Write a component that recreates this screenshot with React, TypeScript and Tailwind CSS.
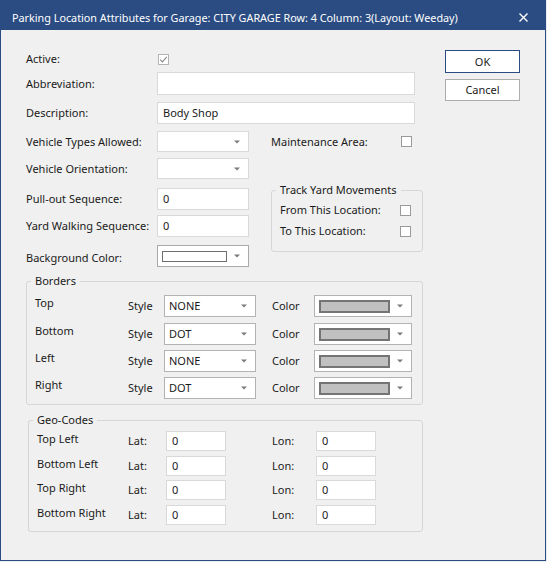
import React from "react";

const Arrow = () => (
  <svg width="6" height="4" viewBox="0 0 6 4" className="shrink-0">
    <path d="M0 0.5h6L3 3.5z" fill="#7b7b7b" />
  </svg>
);

const Box = ({ checked = false }: { checked?: boolean }) => (
  <div
    className={
      checked
        ? "w-[11px] h-[11px] border border-[#b4b4b4] bg-white flex items-center justify-center"
        : "w-[11px] h-[11px] border border-[#9a9a9a] bg-white"
    }
  >
    {checked && (
      <svg width="9" height="9" viewBox="0 0 9 9">
        <path d="M1.2 4.6L3.4 6.9L7.8 1.8" stroke="#8a8a8a" strokeWidth="1.1" fill="none" />
      </svg>
    )}
  </div>
);

const TextBox = ({ value, className }: { value?: string; className: string }) => (
  <div className={`bg-white border border-[#d9d9d9] flex items-center ${className}`}>{value}</div>
);

const Drop = ({ value, className }: { value?: string; className: string }) => (
  <div className={`bg-white border flex items-center justify-between pr-[8px] ${className}`}>
    <span>{value}</span>
    <Arrow />
  </div>
);

const borders = [
  { side: "Top", style: "NONE" },
  { side: "Bottom", style: "DOT" },
  { side: "Left", style: "NONE" },
  { side: "Right", style: "DOT" },
];

const geo = ["Top Left", "Bottom Left", "Top Right", "Bottom Right"];

export default function App() {
  return (
    <div className="w-[547px] h-[562px] bg-[#e9ecef] font-['Noto_Sans',sans-serif] text-[11px] leading-[16px] text-[#1a1a1a] whitespace-nowrap">
      <div className="w-[546px] h-[561px] flex flex-col">
        {/* Title bar */}
        <div className="h-[30px] shrink-0 bg-[#2a4c82] flex items-center justify-between pl-[12px] pr-[18px] pt-[7px] pb-[2px] text-white text-[10.8px]">
          <span>Parking Location Attributes for Garage: CITY GARAGE Row: 4 Column: 3(Layout: Weeday)</span>
          <svg width="9" height="9" viewBox="0 0 9 9">
            <path d="M0.5 0.5L8.5 8.5M8.5 0.5L0.5 8.5" stroke="white" strokeWidth="1.4" />
          </svg>
        </div>

        {/* Body */}
        <div className="flex-1 flex bg-[#f0f0f0] border-x border-b border-[#2a4c82] pl-[25px]">
          <div className="w-[397px] pt-[18px] flex flex-col">
            <div className="h-[22px] flex items-center">
              <span className="w-[132px]">Active:</span>
              <Box checked />
            </div>
            <div className="h-[23px] mt-[2px] flex items-center">
              <span className="w-[131px]">Abbreviation:</span>
              <TextBox className="w-[258px] h-full" />
            </div>
            <div className="h-[22px] mt-[7px] flex items-center">
              <span className="w-[131px]">Description:</span>
              <TextBox value="Body Shop" className="w-[258px] h-full px-[5px]" />
            </div>
            <div className="h-[21px] mt-[7px] flex items-center">
              <span className="w-[131px]">Vehicle Types Allowed:</span>
              <Drop className="w-[92px] h-full border-[#d9d9d9]" />
              <span className="ml-[22px] w-[130px]">Maintenance Area:</span>
              <Box />
            </div>
            <div className="h-[21px] mt-[6px] flex items-center">
              <span className="w-[131px]">Vehicle Orientation:</span>
              <Drop className="w-[92px] h-full border-[#d9d9d9]" />
            </div>

            <div className="mt-[3px] flex items-start">
              <div className="w-[223px] pt-[6px] flex flex-col">
                <div className="h-[22px] flex items-center">
                  <span className="w-[131px]">Pull-out Sequence:</span>
                  <TextBox value="0" className="w-[92px] h-full px-[5px]" />
                </div>
                <div className="h-[22px] mt-[5px] flex items-center">
                  <span className="w-[131px]">Yard Walking Sequence:</span>
                  <TextBox value="0" className="w-[92px] h-full px-[5px]" />
                </div>
                <div className="h-[22px] mt-[8px] flex items-center">
                  <span className="w-[131px] pt-[3px]">Background Color:</span>
                  <div className="w-[92px] h-full bg-white border border-[#a9a9a9] flex items-center justify-between pl-[4px] pr-[8px]">
                    <div className="w-[65px] h-[11px] border border-[#6f6f6f] bg-white" />
                    <Arrow />
                  </div>
                </div>
              </div>

              <fieldset className="ml-[22px] w-[152px] border border-[#d6d6d6] rounded-[3px] px-[4px] pt-[2px] pb-[10px]">
                <legend className="px-[4px]">Track Yard Movements</legend>
                <div className="pl-[4px] flex flex-col">
                  <div className="h-[20px] flex items-center">
                    <span className="w-[120px]">From This Location:</span>
                    <Box />
                  </div>
                  <div className="h-[20px] mt-[1px] flex items-center">
                    <span className="w-[120px]">To This Location:</span>
                    <Box />
                  </div>
                </div>
              </fieldset>
            </div>

            <fieldset className="mt-[6px] border border-[#d6d6d6] rounded-[3px] px-[4px] pt-[6px] pb-[5px]">
              <legend className="px-[4px]">Borders</legend>
              <div className="pl-[4px] flex flex-col gap-[5px]">
                {borders.map((b, i) => (
                  <div key={b.side} className={i === 1 ? "h-[22px] mt-[1px] flex items-center" : "h-[22px] flex items-center"}>
                    <span className="w-[93px] self-start">{b.side}</span>
                    <span className="w-[36px]">Style</span>
                    <Drop value={b.style} className="w-[92px] h-full pl-[4px] border-[#b3b3b3]" />
                    <span className="ml-[16px] w-[42px]">Color</span>
                    <div className="w-[98px] h-full bg-white border border-[#b3b3b3] flex items-center justify-between pl-[4px] pr-[8px]">
                      <div className="w-[71px] h-[13px] border-2 border-[#747474] bg-[#c0c0c0]" />
                      <Arrow />
                    </div>
                  </div>
                ))}
              </div>
            </fieldset>

            <fieldset className="mt-[7px] ml-[2px] border border-[#d6d6d6] rounded-[3px] px-[4px] pt-[3px] pb-[6px]">
              <legend className="px-[4px]">Geo-Codes</legend>
              <div className="pl-[4px] flex flex-col">
                {geo.map((g, i) => (
                  <div
                    key={g}
                    className={
                      i === 0
                        ? "h-[20px] flex items-center"
                        : i === 2
                        ? "h-[20px] mt-[4px] flex items-center"
                        : "h-[20px] mt-[5px] flex items-center"
                    }
                  >
                    <span className="w-[91px] self-start">{g}</span>
                    <span className="w-[38px]">Lat:</span>
                    <TextBox value="0" className="w-[60px] h-full px-[5px]" />
                    <span className="ml-[46px] w-[44px]">Lon:</span>
                    <TextBox value="0" className="w-[60px] h-full px-[5px]" />
                  </div>
                ))}
              </div>
            </fieldset>
          </div>

          {/* Buttons */}
          <div className="ml-[22px] pt-[20px] flex flex-col">
            <button className="w-[75px] h-[23px] bg-white border border-[#2a4c82]">OK</button>
            <button className="w-[75px] h-[22px] mt-[6px] bg-white border border-[#adadad]">Cancel</button>
          </div>
        </div>
      </div>
    </div>
  );
}
